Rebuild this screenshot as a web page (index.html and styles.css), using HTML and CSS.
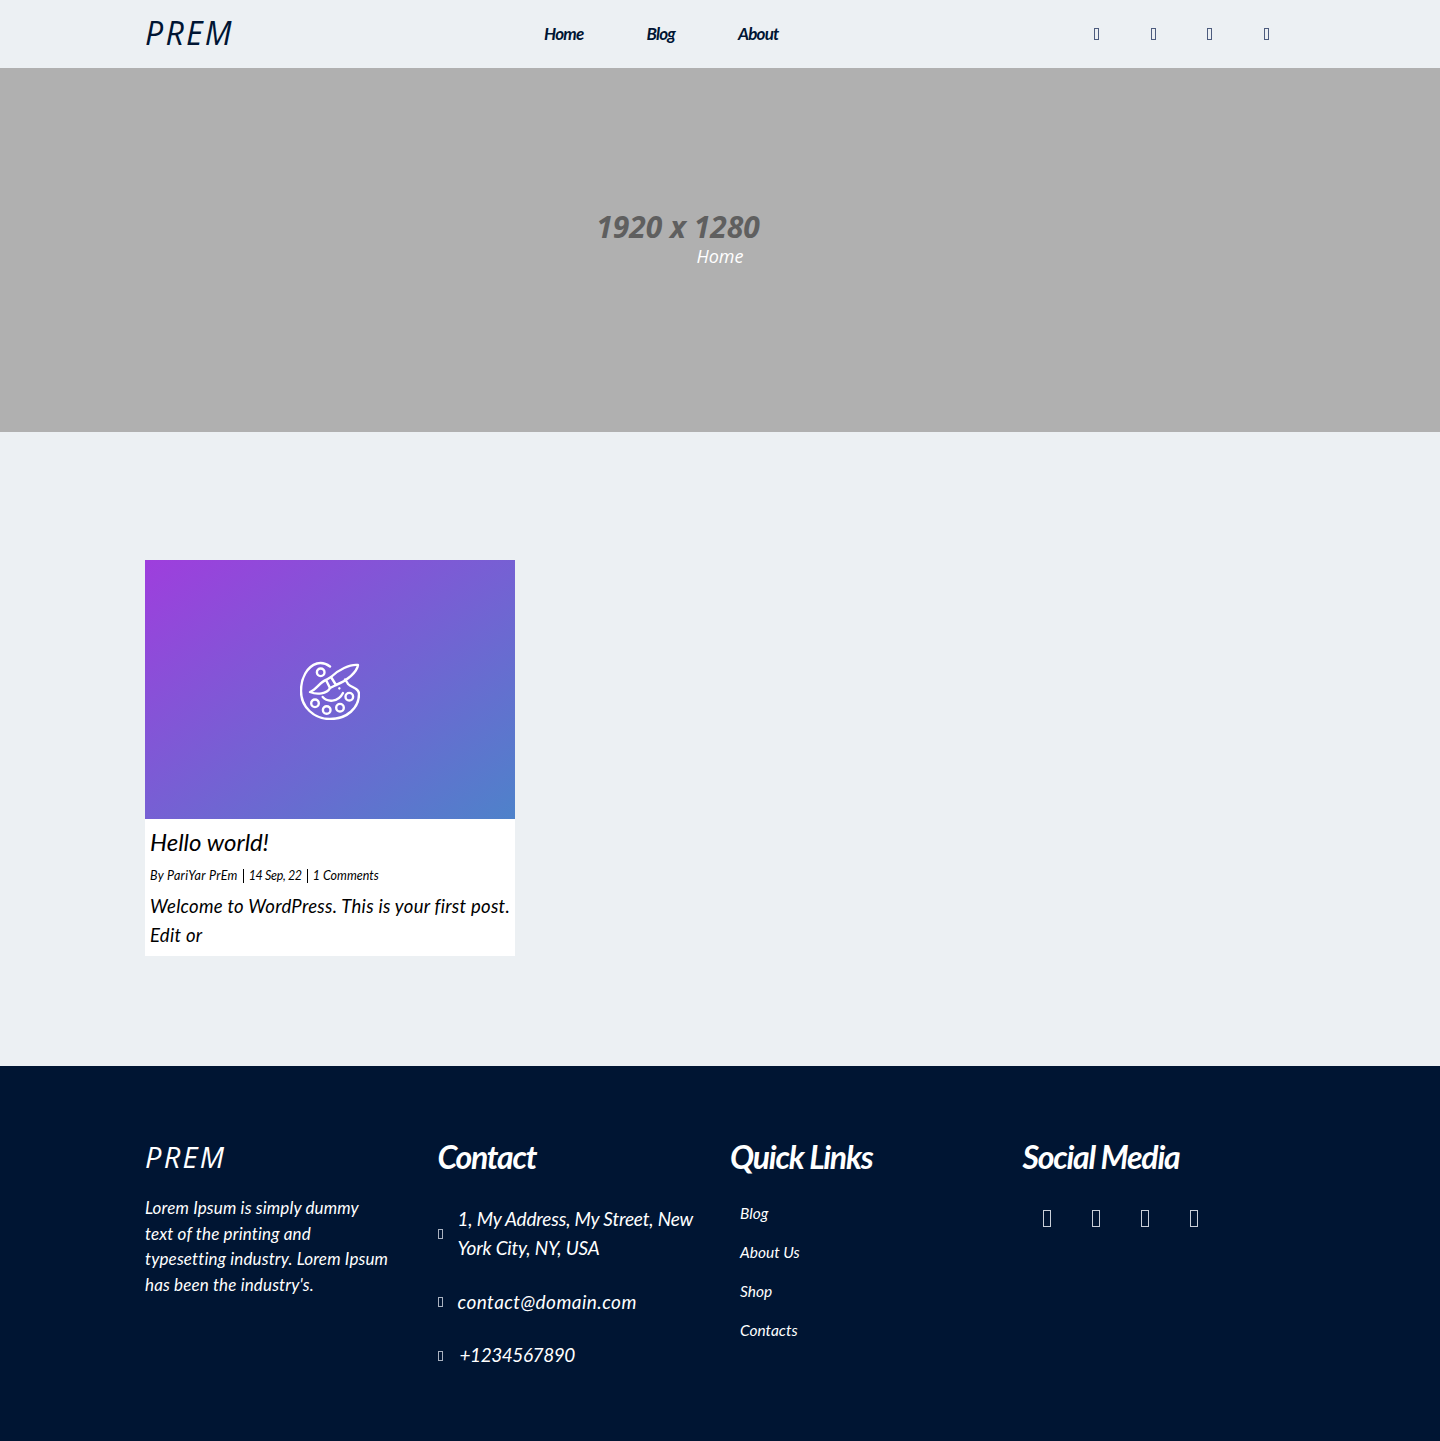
FILE: index.html
```html
<!DOCTYPE html>
<html lang="en">
<head>
    <meta charset="UTF-8">
    <meta name="viewport" content="width=device-width, initial-scale=1.0">
    <title>PREM</title>
    <link rel="stylesheet" href="styles.css">
</head>
<body>
    <header class="site-header">
        <div class="container header-row">
            <a class="logo" href="#">PREM</a>
            <nav class="main-nav">
                <a href="#">Home</a>
                <a href="#">Blog</a>
                <a href="#">About</a>
            </nav>
            <div class="header-icons">
                <span class="tofu"></span>
                <span class="tofu"></span>
                <span class="tofu"></span>
                <span class="tofu"></span>
            </div>
        </div>
    </header>

    <section class="hero">
        <h1 class="hero-title">1920 x 1280</h1>
        <div class="hero-crumb">Home</div>
    </section>

    <main class="container posts">
        <article class="post-card">
            <div class="post-thumb">
                <svg class="palette" width="60" height="60" viewBox="0 0 60 60" fill="none" stroke="#fff" stroke-width="2.4" stroke-linecap="round" stroke-linejoin="round">
                    <path d="M30 6.500C26 3.500 21 2.500 17 3.500C7 6.500 1 18 1 31C1 47 14 59 30 59C47 59 59 48 59 34C59 28 52 28 48 24C47 22 46 21 45 19.500"/>
                    <path d="M31 17C38 10 50 4 58 5C57 12 47 21 36 25Z"/>
                    <path d="M31 17L26 20L30 28L36 25"/>
                    <path d="M26 20C20 22 17 29 10 32C17 35 27 34 30 28"/>
                    <circle cx="20.700" cy="12.300" r="3.800"/>
                    <circle cx="15" cy="43.300" r="3.800"/>
                    <circle cx="26.700" cy="50" r="3.800"/>
                    <circle cx="40" cy="47.700" r="3.800"/>
                    <circle cx="49.300" cy="36.700" r="3.800"/>
                    <path d="M22.700 37C27 42 38 43 43 33"/>
                    <path d="M39.300 28.300L39.400 28.400"/>
                </svg>
            </div>
            <div class="post-body">
                <h2 class="post-title">Hello world!</h2>
                <div class="post-meta">
                    <span class="meta-author">By PariYar PrEm</span>
                    <span class="meta-date">14 Sep, 22</span>
                    <span>1 Comments</span>
                </div>
                <p class="post-text">Welcome to WordPress. This is your first post. Edit or</p>
            </div>
        </article>
    </main>

    <footer class="site-footer">
        <div class="container footer-grid">
            <div class="footer-col">
                <a class="logo footer-logo" href="#">PREM</a>
                <p class="footer-about">Lorem Ipsum is simply dummy text of the printing and typesetting industry. Lorem Ipsum has been the industry's.</p>
            </div>
            <div class="footer-col">
                <h3 class="footer-heading">Contact</h3>
                <ul class="contact-list">
                    <li><span class="tofu tofu-small"></span><span>1, My Address, My Street, New York City, NY, USA</span></li>
                    <li><span class="tofu tofu-small"></span><span class="email">contact@domain.com</span></li>
                    <li><span class="tofu tofu-small"></span><span class="phone">+1234567890</span></li>
                </ul>
            </div>
            <div class="footer-col">
                <h3 class="footer-heading">Quick Links</h3>
                <ul class="quick-links">
                    <li><a href="#">Blog</a></li>
                    <li><a href="#">About Us</a></li>
                    <li><a href="#">Shop</a></li>
                    <li><a href="#">Contacts</a></li>
                </ul>
            </div>
            <div class="footer-col">
                <h3 class="footer-heading">Social Media</h3>
                <div class="social-icons">
                    <span class="tofu tofu-large"></span>
                    <span class="tofu tofu-large"></span>
                    <span class="tofu tofu-large"></span>
                    <span class="tofu tofu-large"></span>
                </div>
            </div>
        </div>
    </footer>
</body>
</html>
```

FILE: styles.css
```css
* {
    box-sizing: border-box;
}
body {
    margin: 0;
    font-family: 'Lato', 'Open Sans', sans-serif;
    font-style: italic;
    background-color: #ecf0f3;
    color: #000;
}
a {
    color: inherit;
    text-decoration: none;
}
ul {
    list-style: none;
    margin: 0;
    padding: 0;
}
.container {
    width: 1170px;
    margin-left: 145px;
}

/* header */
.site-header {
    height: 68px;
    color: #001533;
}
.header-row {
    display: flex;
    align-items: center;
    height: 100%;
}
.logo {
    font-family: 'Open Sans', sans-serif;
    font-size: 32px;
    letter-spacing: 2.300px;
    line-height: 1;
    color: #001533;
    width: 399px;
    margin-top: -3px;
}
.main-nav {
    display: flex;
    gap: 63px;
    width: 550px;
    margin-top: -2px;
    font-weight: 700;
    font-size: 17px;
    letter-spacing: -0.800px;
}
.header-icons {
    display: flex;
    gap: 51.600px;
}
.tofu {
    display: block;
    width: 5px;
    height: 12px;
    border: 1px solid #4d5c7e;
}
.tofu-small {
    flex: none;
    height: 10px;
    margin-top: 2px;
    border-color: #a9b1bf;
}
.tofu-large {
    width: 8px;
    height: 17px;
    border-color: #c9cfd9;
}

/* hero */
.hero {
    height: 364px;
    background-color: #b0b0b0;
    display: flex;
    flex-direction: column;
    align-items: center;
    padding-top: 144px;
}
.hero-title {
    margin: 0 84px 0 0;
    font-family: 'Open Sans', sans-serif;
    font-size: 30px;
    font-weight: bold;
    line-height: 30px;
    color: #5f5f5f;
}
.hero-crumb {
    margin-top: 3px;
    font-family: 'Open Sans', sans-serif;
    font-size: 18px;
    line-height: 22px;
    color: #fff;
}

/* posts */
.posts {
    padding: 128px 0 110px;
}
.post-card {
    width: 370px;
    background-color: #fff;
}
.post-thumb {
    height: 259px;
    background: linear-gradient(145deg, #9e3edd, #4e82ca);
    display: flex;
    align-items: center;
    justify-content: center;
}
.post-body {
    padding: 5px 0 6px 5px;
}
.post-title {
    margin: 0;
    font-size: 24px;
    font-weight: normal;
    line-height: 36px;
}
.post-meta {
    display: flex;
    margin-top: 9px;
    font-size: 12.500px;
    line-height: 14px;
}
.post-meta span + span {
    border-left: 1px solid #000;
    margin-left: 5px;
    padding-left: 5px;
}
.meta-author {
    letter-spacing: 0.330px;
}
.meta-date {
    letter-spacing: -0.350px;
}
.post-text {
    margin: 9px 0 0;
    width: 362px;
    font-size: 18.500px;
    line-height: 29px;
    letter-spacing: 0.280px;
}

/* footer */
.site-footer {
    height: 375px;
    background-color: #001533;
    color: #fff;
    padding-top: 72px;
}
.footer-grid {
    display: grid;
    grid-template-columns: repeat(4, 292.500px);
}
.footer-logo {
    display: block;
    width: auto;
    height: 38px;
    margin-top: 0;
    line-height: 38px;
    font-size: 29px;
    color: #fff;
}
.footer-about {
    margin: 19px 0 0;
    width: 245px;
    font-size: 17px;
    line-height: 25.700px;
    letter-spacing: 0.150px;
}
.footer-heading {
    margin: 0;
    font-size: 32px;
    font-weight: 700;
    line-height: 38px;
    letter-spacing: -1.250px;
}
.contact-list {
    margin-top: 28px;
    font-size: 19px;
    line-height: 29px;
    letter-spacing: -0.170px;
}
.contact-list li {
    display: flex;
    align-items: center;
    gap: 15px;
    width: 265px;
    margin-bottom: 24.500px;
}
.email {
    letter-spacing: 0.450px;
}
.phone {
    margin-left: 2px;
    letter-spacing: -0.450px;
}
.quick-links {
    margin-top: 18px;
    padding-left: 10px;
    font-size: 15.500px;
    line-height: 39px;
}
.social-icons {
    display: flex;
    gap: 41px;
    margin-top: 34px;
    padding-left: 20px;
}
```
